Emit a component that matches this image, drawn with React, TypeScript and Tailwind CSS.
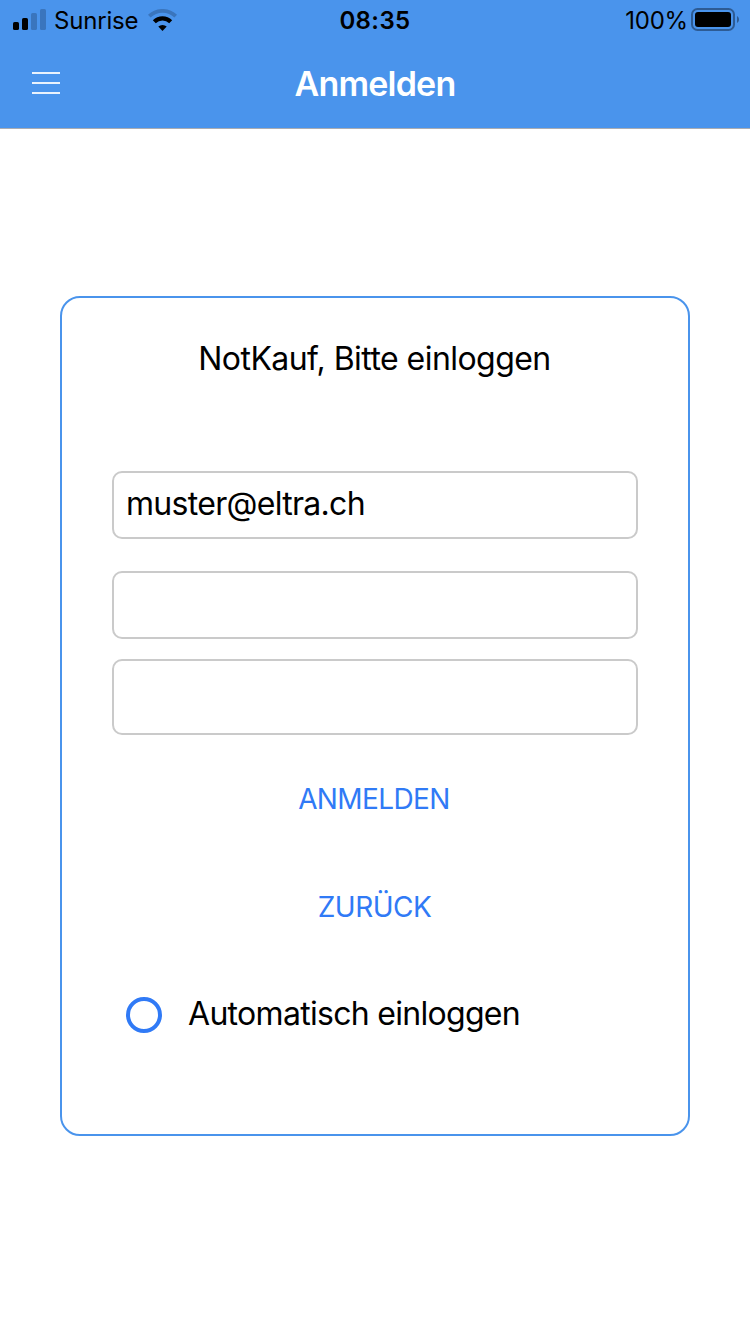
function SignalIcon() {
  return (
    <svg className="mb-[2px] shrink-0" width="33" height="22" viewBox="0 0 33 22">
      <rect x="0" y="13" width="6" height="8" rx="1.6" />
      <rect x="9" y="9" width="6" height="12" rx="1.6" />
      <rect x="18" y="4" width="6" height="17" rx="1.6" fill="#3a75bd" />
      <rect x="27" y="0" width="6" height="21" rx="1.6" fill="#3a75bd" />
    </svg>
  );
}

function WifiIcon() {
  return (
    <svg className="mb-[2px] ml-[10px] shrink-0" width="30" height="22" viewBox="0 0 30 22" fill="none">
      <path d="M1.3 7.2a19 19 0 0 1 26.400 0" stroke="#3a75bd" strokeWidth="3.8" />
      <path d="M6.300 12.700a11.800 11.800 0 0 1 16.400 0" stroke="#000" strokeWidth="4.2" />
      <path d="M10.300 17.600a6.400 6.400 0 0 1 8.400 0L14.500 22Z" fill="#000" />
    </svg>
  );
}

function BatteryIcon() {
  return (
    <svg className="mb-[2px] shrink-0" width="49" height="24" viewBox="0 0 49 24">
      <rect x="1" y="1" width="42" height="21" rx="5.5" fill="none" stroke="#2d5b94" strokeWidth="2" />
      <rect x="4" y="4" width="36" height="15" rx="3" />
      <path d="M46 8c1.3.7 2 2 2 3.5S47.300 14.300 46 15Z" fill="#2d5b94" />
    </svg>
  );
}

export default function App() {
  return (
    <div className="flex h-[1334px] w-[750px] flex-col overflow-hidden bg-white font-['Inter',sans-serif] text-black">
      <header className="flex h-[129px] shrink-0 flex-col border-b border-[#a9acb2] bg-[#4a94ec]">
        <div className="grid h-[42px] grid-cols-3 items-center pl-[13px] pr-[10px] text-[24px] leading-[42px]">
          <div className="flex items-center">
            <SignalIcon />
            <span className="ml-2 tracking-[-0.2px]">Sunrise</span>
            <WifiIcon />
          </div>
          <span className="pr-[3px] text-center font-semibold tracking-[0.4px]">08:35</span>
          <div className="flex items-center justify-end">
            <span className="mr-[3px] tracking-[-0.2px]">100%</span>
            <BatteryIcon />
          </div>
        </div>
        <div className="grid h-[86px] grid-cols-[60px_1fr_60px] px-8">
          <button aria-label="Menu" className="flex flex-col items-start gap-2 pt-[30px]">
            <span className="h-[2px] w-7 bg-[#e9f2fd]" />
            <span className="h-[2px] w-7 bg-[#e9f2fd]" />
            <span className="h-[2px] w-7 bg-[#e9f2fd]" />
          </button>
          <h1 className="text-center text-[34px] font-semibold leading-[84px] tracking-[-0.8px] text-white">Anmelden</h1>
        </div>
      </header>

      <main className="mx-[60px] mt-[167px] flex h-[840px] shrink-0 flex-col rounded-[20px] border-2 border-[#4a94ec] px-[50px]">
        <p className="mt-[41px] pr-px text-center text-[32px] leading-10 tracking-[-0.55px]">NotKauf, Bitte einloggen</p>

        <div className="mt-[92px] flex h-[68px] items-center rounded-[10px] border-2 border-[#cacaca] px-3">
          <span className="pb-[2px] text-[32px] leading-10 tracking-[-0.7px]">muster@eltra.ch</span>
        </div>
        <div className="mt-8 h-[68px] rounded-[10px] border-2 border-[#cacaca]" />
        <div className="mt-5 h-[76px] rounded-[10px] border-2 border-[#cacaca]" />

        <button className="mt-11 h-10 self-center pr-[2px] text-[28px] leading-10 tracking-[-0.6px] text-[#307af6]">ANMELDEN</button>
        <button className="mt-[68px] h-10 self-center pr-px text-[28px] leading-10 tracking-[-0.5px] text-[#307af6]">ZURÜCK</button>

        <div className="mt-[68px] flex h-10 items-center pl-[14px]">
          <span className="size-9 rounded-full border-4 border-[#307af6]" />
          <span className="ml-[26px] pb-[2px] text-[32px] leading-10 tracking-[-0.7px]">Automatisch einloggen</span>
        </div>
      </main>
    </div>
  );
}
